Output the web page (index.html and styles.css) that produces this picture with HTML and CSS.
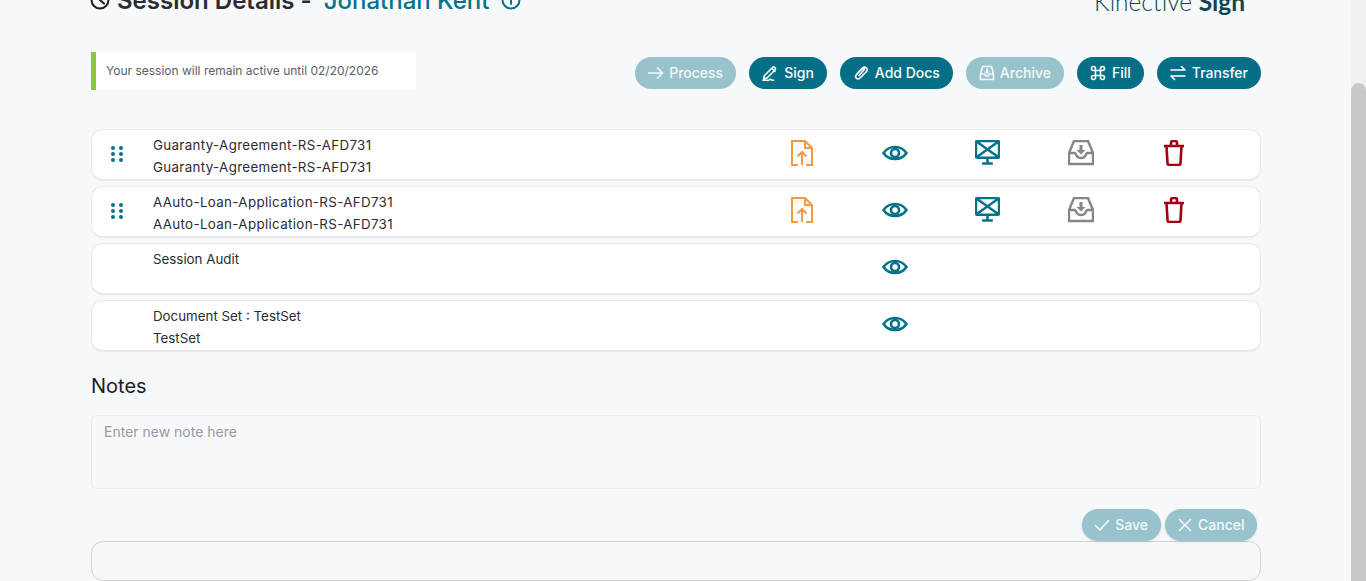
FILE: index.html
```html
<!DOCTYPE html>
<html lang="en">
  <head>
    <meta charset="UTF-8" />
    <meta name="viewport" content="width=device-width, initial-scale=1.0" />
    <title>Session Details</title>
    <link rel="stylesheet" href="styles.css">
  </head>
  <body>
    <div class="page">
      <main class="content">
        <header class="top">
          <h1 class="title">
            <svg class="clock" viewBox="0 0 20 20"><circle cx="10" cy="10" r="8.5"/><path d="M10 5v5l4 3.5"/></svg>
            <span>Session Details -</span>
            <span class="name">Jonathan Kent</span>
            <svg class="info" viewBox="0 0 20 20"><circle cx="10" cy="10" r="8.5"/><path d="M10 9v5M10 5.500v1"/></svg>
          </h1>
          <div class="brand">Kinective <b>Sign</b></div>
        </header>

        <div class="toolbar">
          <div class="notice">Your session will remain active until 02/20/2026</div>
          <div class="actions">
            <button class="btn faded tight">
              <svg viewBox="0 0 16 16"><path d="M.5 8h14M9.500 3l5 5-5 5"/></svg>Process
            </button>
            <button class="btn">
              <svg viewBox="0 0 16 16"><path d="M2.500 10.500 10.500 2.500c1.500-1.500 4 .8 2.500 2.500l-8 8-3.500 1zM10 3.500l3 3M1 15.200h6l1.500-1 1.500 1h1.500"/></svg>Sign
            </button>
            <button class="btn">
              <svg viewBox="0 0 16 16"><path d="M6 10.500 11 5c.9-1-.4-2.300-1.500-1.400L3.500 9.500c-2.500 2.700 1 6 3.500 3.500l6.500-6.500c2.300-2.500-1.500-6-4-3.500L4.500 8"/></svg>Add Docs
            </button>
            <button class="btn faded tight">
              <svg viewBox="0 0 16 16"><path d="M3.500 1.500h9l2 7.500v5.500H1.500V9zM1.500 9h4l1 2h3l1-2h4"/><path class="solid" d="M7 3.500h2v3h2L8 9.500 5 6.500h2z"/></svg>Archive
            </button>
            <button class="btn">
              <svg viewBox="0 0 16 16"><path d="M5.500 5.500h5v5h-5zM5.500 5.500h-2a2 2 0 1 1 2-2zM10.500 5.500v-2a2 2 0 1 1 2 2zM10.500 10.500h2a2 2 0 1 1-2 2zM5.500 10.500v2a2 2 0 1 1-2-2z"/></svg>Fill
            </button>
            <button class="btn">
              <svg viewBox="0 0 16 16"><path d="M1 5h14M11.500 1.500 15 5M15 11H1M4.500 14.500 1 11"/></svg>Transfer
            </button>
          </div>
        </div>

        <section class="docs">
          <div class="doc">
            <svg class="grip" viewBox="0 0 14 18"><circle cx="3" cy="3" r="2"/><circle cx="11" cy="3" r="2"/><circle cx="3" cy="9" r="2"/><circle cx="11" cy="9" r="2"/><circle cx="3" cy="15" r="2"/><circle cx="11" cy="15" r="2"/></svg>
            <div class="doc-name file"><div>Guaranty-Agreement-RS-AFD731</div><div>Guaranty-Agreement-RS-AFD731</div></div>
            <svg class="ico orange" viewBox="0 0 22 26"><path d="M7 25H1V1h13l7 7v17h-6M14 1v7h7M11 25V12M6.500 16.500 11 12l4.500 4.500"/></svg>
            <svg class="ico teal eye" viewBox="0 0 26 18"><path d="M1.500 9C7 1 19 1 24.500 9 19 17 7 17 1.500 9z"/><circle cx="13" cy="9" r="4"/></svg>
            <svg class="ico teal screen" viewBox="0 0 26 26"><path d="M2.500 1h21q1.500 0 1.500 1.500V17q0 1.500-1.500 1.500h-21Q1 18.500 1 17V2.500Q1 1 2.500 1zM1.500 1.500l23 16.500M24.500 1.500 1.500 18M13 18.500V24M7.500 24.500h11"/></svg>
            <svg class="ico gray" viewBox="0 0 26 26"><path d="M6 1h14l5 12v11H1V13zM1 13h6c1 0 1 5 6 5s5-5 6-5h6"/><path class="solid" d="M11.500 5h3v5h3L13 14.500 8.500 10h3z"/></svg>
            <svg class="ico red" viewBox="0 0 22 26"><path d="M1 6h20M8 6V3q0-2 2-2h2q2 0 2 2v3M3.500 6l1 17q0 2 2 2h9q2 0 2-2l1-17"/></svg>
          </div>
          <div class="doc">
            <svg class="grip" viewBox="0 0 14 18"><circle cx="3" cy="3" r="2"/><circle cx="11" cy="3" r="2"/><circle cx="3" cy="9" r="2"/><circle cx="11" cy="9" r="2"/><circle cx="3" cy="15" r="2"/><circle cx="11" cy="15" r="2"/></svg>
            <div class="doc-name file"><div>AAuto-Loan-Application-RS-AFD731</div><div>AAuto-Loan-Application-RS-AFD731</div></div>
            <svg class="ico orange" viewBox="0 0 22 26"><path d="M7 25H1V1h13l7 7v17h-6M14 1v7h7M11 25V12M6.500 16.500 11 12l4.500 4.500"/></svg>
            <svg class="ico teal eye" viewBox="0 0 26 18"><path d="M1.500 9C7 1 19 1 24.500 9 19 17 7 17 1.500 9z"/><circle cx="13" cy="9" r="4"/></svg>
            <svg class="ico teal screen" viewBox="0 0 26 26"><path d="M2.500 1h21q1.500 0 1.500 1.500V17q0 1.500-1.500 1.500h-21Q1 18.500 1 17V2.500Q1 1 2.500 1zM1.500 1.500l23 16.500M24.500 1.500 1.500 18M13 18.500V24M7.500 24.500h11"/></svg>
            <svg class="ico gray" viewBox="0 0 26 26"><path d="M6 1h14l5 12v11H1V13zM1 13h6c1 0 1 5 6 5s5-5 6-5h6"/><path class="solid" d="M11.500 5h3v5h3L13 14.500 8.500 10h3z"/></svg>
            <svg class="ico red" viewBox="0 0 22 26"><path d="M1 6h20M8 6V3q0-2 2-2h2q2 0 2 2v3M3.500 6l1 17q0 2 2 2h9q2 0 2-2l1-17"/></svg>
          </div>
          <div class="doc">
            <span></span>
            <div class="doc-name"><div>Session Audit</div></div>
            <span></span>
            <svg class="ico teal eye" viewBox="0 0 26 18"><path d="M1.500 9C7 1 19 1 24.500 9 19 17 7 17 1.500 9z"/><circle cx="13" cy="9" r="4"/></svg>
          </div>
          <div class="doc">
            <span></span>
            <div class="doc-name"><div>Document Set : TestSet</div><div>TestSet</div></div>
            <span></span>
            <svg class="ico teal eye" viewBox="0 0 26 18"><path d="M1.500 9C7 1 19 1 24.500 9 19 17 7 17 1.500 9z"/><circle cx="13" cy="9" r="4"/></svg>
          </div>
        </section>

        <h2 class="notes-title">Notes</h2>
        <div class="note-input">Enter new note here</div>
        <div class="note-actions">
          <button class="btn faded soft tight">
            <svg viewBox="0 0 16 16"><path d="M1.500 8.500 6 13l8.500-9.500"/></svg>Save
          </button>
          <button class="btn faded soft tight">
            <svg viewBox="0 0 16 16"><path d="M2.500 2.500l11 11M13.500 2.500l-11 11"/></svg>Cancel
          </button>
        </div>
        <div class="note-list"></div>
      </main>
      <div class="scrollbar"><div class="thumb"></div></div>
    </div>
  </body>
</html>
```

FILE: styles.css
```css
* {
  box-sizing: border-box;
}
html,
body {
  margin: 0;
  height: 100%;
  overflow: hidden;
}
body {
  background-color: #f7f8fa;
  color: #2b2b33;
  font-family: Inter, "Liberation Sans", sans-serif;
}
.page {
  display: flex;
  height: 581px;
  overflow: hidden;
}
.content {
  flex: 1;
  min-width: 0;
  padding: 0 90px 0 91px;
}
.scrollbar {
  width: 15px;
  padding-top: 83px;
  background-color: #f1f1f1;
}
.thumb {
  height: 520px;
  background-color: #c8c8c8;
  border-radius: 8px;
}

/* the page is scrolled a little, so the heading is cut off */
.top {
  display: flex;
  justify-content: space-between;
  align-items: flex-start;
  height: 54px;
  margin-top: -15px;
  padding-right: 16px;
}
.title {
  display: flex;
  align-items: center;
  margin: 0;
  height: 30px;
  font-size: 24px;
  font-weight: 600;
}
.title svg {
  fill: none;
  stroke-width: 2;
  stroke-linecap: round;
  flex: none;
}
.clock {
  width: 20px;
  height: 20px;
  margin: 0 7px 0 -1px;
  stroke: #1a1a22;
}
.name {
  margin-left: 12px;
  color: #04728a;
  font-weight: 500;
}
.info {
  width: 20px;
  height: 20px;
  margin-left: 12px;
  stroke: #04728a;
}
.brand {
  font-size: 24.5px;
  line-height: 30px;
  margin-top: 2px;
  font-family: Lato, sans-serif;
  color: #0c4650;
  font-weight: 300;
}
.brand b {
  font-weight: 700;
}

.toolbar {
  display: flex;
  justify-content: space-between;
  align-items: flex-start;
  height: 77px;
  margin-top: 13px;
}
.notice {
  width: 325px;
  height: 38px;
  line-height: 38px;
  padding-left: 10px;
  border-left: 5px solid #8cc63f;
  background-color: #fff;
  color: #5d5d68;
  font-size: 12px;
}
.actions {
  display: flex;
  gap: 13px;
  margin-top: 5px;
}
.btn {
  display: flex;
  align-items: center;
  gap: 6px;
  height: 32px;
  padding: 0 13px 1px;
  border: 0;
  border-radius: 16px;
  background-color: #046f87;
  color: #fff;
  font-family: inherit;
  font-size: 14px;
  font-weight: 500;
}
.btn svg {
  width: 16px;
  height: 16px;
  fill: none;
  stroke: currentColor;
  stroke-width: 1.6;
  stroke-linecap: round;
  stroke-linejoin: round;
  flex: none;
}
.btn svg .solid {
  fill: currentColor;
  stroke: none;
}
.tight {
  gap: 5px;
}
.faded {
  background-color: #98c3cc;
  color: #f3f9fa;
}
.soft {
  box-shadow: 0 1px 3px rgba(0, 0, 0, 0.12);
  padding: 0 12.5px 1px;
}

.docs {
  display: flex;
  flex-direction: column;
  gap: 5px;
}
.doc {
  display: grid;
  grid-template-columns: 61px 602px repeat(5, 93px);
  align-items: start;
  height: 52px;
  background-color: #fff;
  border: 1px solid #e8e9ec;
  border-bottom-width: 2px;
  border-radius: 12px;
}
.grip {
  width: 14px;
  height: 18px;
  margin: 15px 0 0 18px;
  fill: #04728a;
}
.doc-name {
  padding-top: 4px;
  font-size: 13.33px;
  line-height: 22px;
}
.file {
  letter-spacing: 0.35px;
}
.ico {
  justify-self: center;
  width: 26px;
  height: 26px;
  margin-top: 10px;
  fill: none;
  stroke-width: 2.4;
}
.ico .solid {
  stroke: none;
  fill: #85868a;
}
.eye {
  height: 18px;
  margin-top: 14px;
  stroke-width: 2.6;
}
.orange {
  stroke: #f79a3e;
  stroke-width: 2;
}
.teal {
  stroke: #04728a;
}
.screen {
  width: 25px;
  height: 25px;
  stroke-width: 2.6;
}
.gray {
  stroke: #85868a;
}
.red {
  stroke: #a00010;
  stroke-width: 2.6;
}

.notes-title {
  margin: 22px 0 17px;
  font-size: 20px;
  line-height: 24px;
  font-weight: 400;
  color: #1c1c24;
}
.note-input {
  height: 74px;
  padding: 7px 12px;
  border: 1px solid #e9eaec;
  border-radius: 6px;
  color: #9a9a9f;
  font-size: 14px;
  line-height: 18px;
}
.note-actions {
  display: flex;
  justify-content: flex-end;
  gap: 4px;
  margin-top: 20px;
  padding-right: 4px;
}
.note-list {
  height: 40px;
  border: 1px solid #d2d3d6;
  border-radius: 12px;
}
```
